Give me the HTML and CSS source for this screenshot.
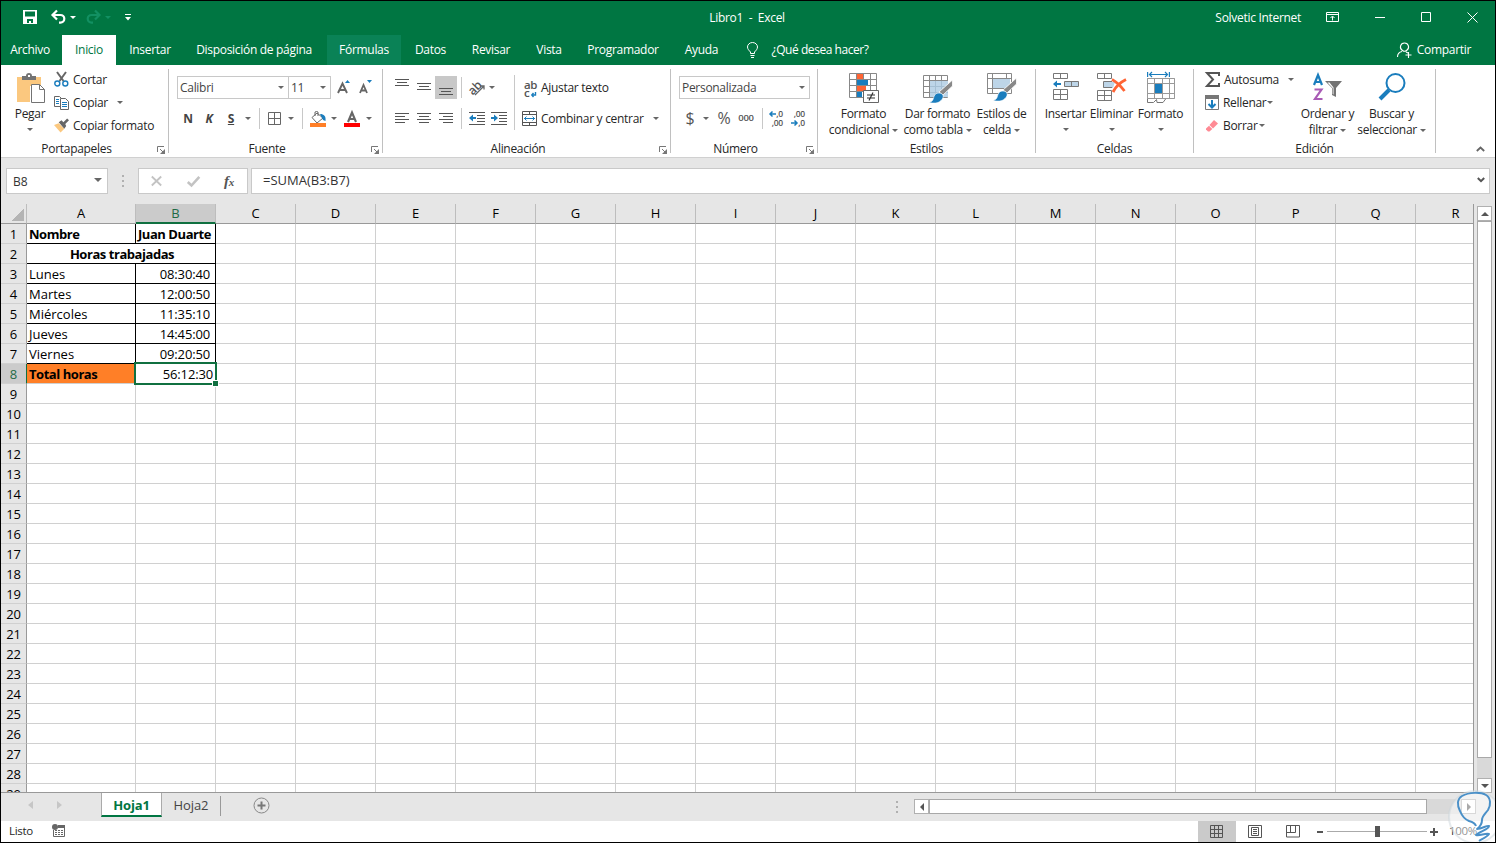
FILE: index.html
```html
<!DOCTYPE html>
<html lang="es">
<head>
    <meta charset="UTF-8">
    <meta name="viewport" content="width=device-width, initial-scale=1.0">
    <title>Libro1 - Excel</title>
    <link rel="stylesheet" href="styles.css">
</head>
<body>
    <div class="window">
        <header>
            <div class="titlebar">
                <div class="quick">
                    <svg width="14" height="14" viewBox="0 0 14 14"><path fill="#fff" fill-rule="evenodd" d="M0 0h14v14H0zM2 1.5v5h10v-5zM4 9v4h2v-2h2v2h2V9z"/></svg>
                    <svg class="undo" width="15" height="14" viewBox="0 0 15 14"><path fill="none" stroke="#fff" stroke-width="2.200" d="M6 .5L1.500 5L6 9.500M2 5h7.500a3.800 3.800 0 0 1 0 7.600H8"/></svg>
                    <i class="caret white"></i>
                    <svg class="redo" width="15" height="14" viewBox="0 0 15 14"><path fill="none" stroke="#129062" stroke-width="2.200" d="M9 .5L13.500 5L9 9.500M13 5H5.500a3.800 3.800 0 0 0 0 7.600H7"/></svg>
                    <i class="caret dim"></i>
                    <svg class="more" width="6" height="7" viewBox="0 0 6 7"><path fill="#fff" d="M0 0h6v1H0zM0 3h6L3 6.500z"/></svg>
                </div>
                <div class="title">Libro1 &nbsp;-&nbsp; Excel</div>
                <div class="user">Solvetic Internet</div>
                <svg class="winbtn" width="13" height="10" viewBox="0 0 13 10"><path fill="none" stroke="#fff" d="M.5.5h12v9H.5zM.5 2.500h12M6.500 8.500v-4M4.500 6l2-2 2 2"/></svg>
                <svg class="winbtn" width="10" height="10" viewBox="0 0 10 10"><path stroke="#fff" d="M0 5.500h10"/></svg>
                <svg class="winbtn" width="10" height="10" viewBox="0 0 10 10"><path fill="none" stroke="#fff" d="M.5.5h9v9h-9z"/></svg>
                <svg class="winbtn" width="11" height="11" viewBox="0 0 11 11"><path stroke="#fff" d="M.5.5l10 10M10.500.5l-10 10"/></svg>
            </div>
            <nav class="tabs">
                <span class="t-archivo">Archivo</span>
                <span class="t-inicio active">Inicio</span>
                <span class="t-insertar">Insertar</span>
                <span class="t-disp">Disposición de página</span>
                <span class="t-formulas hover">Fórmulas</span>
                <span class="t-datos">Datos</span>
                <span class="t-revisar">Revisar</span>
                <span class="t-vista">Vista</span>
                <span class="t-prog">Programador</span>
                <span class="t-ayuda">Ayuda</span>
                <svg class="bulb" width="11" height="16" viewBox="0 0 11 16"><path fill="none" stroke="#fff" d="M3.500 11.500V10C2 8.500.5 7 .5 5a5 4.500 0 0 1 10 0c0 2-1.500 3.500-3 5v1.500zM3.500 13.500h4M4 15.500h3"/></svg>
                <span class="t-que">¿Qué desea hacer?</span>
                <svg class="person" width="15" height="16" viewBox="0 0 15 16"><path fill="none" stroke="#fff" stroke-width="1.100" d="M.5 15c0-3 2-5 4.500-5.500M7.500 1a4 4 0 0 1 2 7.500c-1 .8-3 .8-4 0A4 4 0 0 1 7.500 1zM9 10l2 1M11.500 10v6M8.500 13h6"/></svg>
                <span class="t-share">Compartir</span>
            </nav>
        </header>

        <div class="ribbon">
            <section class="group g-clip">
                <div class="tools">
                    <div class="paste">
                        <svg width="30" height="31" viewBox="0 0 30 31"><path fill="#fbc87f" d="M0 4h24v9H13v16H0z"/><path fill="#737373" d="M5 7V3h4a3 3 0 0 1 6 0h4v4z"/><path fill="#fff" d="M11 2h2v2h-2z"/><path fill="#fff" stroke="#737373" d="M14.500 11.500h8l5 5v13h-13z"/><path fill="none" stroke="#737373" d="M22.500 11.500v5h5"/></svg>
                        <b>Pegar</b>
                        <i class="caret"></i>
                    </div>
                    <div class="list">
                        <div><svg width="15" height="15" viewBox="0 0 15 15"><path stroke="#666" stroke-width="2" d="M3 0l6.500 9M12 0L5.500 9"/><circle cx="3.300" cy="11.500" r="2.500" fill="none" stroke="#1a7dbd" stroke-width="1.400"/><circle cx="11.300" cy="11.500" r="2.500" fill="none" stroke="#1a7dbd" stroke-width="1.400"/></svg>Cortar</div>
                        <div><svg width="15" height="15" viewBox="0 0 15 15"><path fill="#fff" stroke="#666" d="M.5 1.500h5l2 2v8h-7z"/><path stroke="#1a7dbd" d="M2 4.500h3M2 6.500h3M2 8.500h3"/><path fill="#fff" stroke="#666" d="M6.500 3.500h5l3 3v8h-8z"/><path stroke="#1a7dbd" d="M8 7.500h5M8 9.500h5M8 11.500h5"/></svg>Copiar<i class="caret"></i></div>
                        <div><svg width="15" height="15" viewBox="0 0 16 15"><path fill="#fbc87f" d="M0 7l5-2 6 6-4 4z"/><path fill="#666" d="M5 4l3-2 2 2 4-4 2 2-4 4 1 2-2 3z"/></svg>Copiar formato</div>
                    </div>
                </div>
                <div class="label">Portapapeles<svg class="launch" width="8" height="8" viewBox="0 0 8 8"><path fill="none" stroke="#777" d="M.5 6V.5H7M3 3l3 3"/><path fill="#777" d="M8 3v5H3z"/></svg></div>
            </section>

            <section class="group g-font">
                <div class="tools rows">
                    <div class="font-row1">
                        <div class="select">Calibri<i class="caret"></i></div>
                        <div class="select size">11<i class="caret"></i></div>
                        <svg class="grow" width="14" height="15" viewBox="0 0 14 15"><path fill="none" stroke="#666" stroke-width="1.900" d="M1 13L5.500 3.500L10 13M2.500 10h6"/><path fill="#1a7dbd" d="M8 3h5l-2.500-3z"/></svg>
                        <svg class="shrink" width="14" height="15" viewBox="0 0 14 15"><path fill="none" stroke="#666" stroke-width="1.800" d="M1 13l3.500-8L8 13M2.500 10.500h4.500"/><path fill="#1a7dbd" d="M8 0h5l-2.500 3z"/></svg>
                    </div>
                    <div class="font-row2">
                        <b>N</b><b class="it">K</b><b class="un">S</b><i class="caret"></i><i class="sep"></i>
                        <svg width="13" height="13" viewBox="0 0 13 13"><path fill="none" stroke="#666" d="M.5.500h12v12H.5zM6.500 0v13M0 6.500h13"/></svg>
                        <i class="caret"></i><i class="sep"></i>
                        <svg width="16" height="16" viewBox="0 0 16 16"><path fill="#fff" stroke="#666" d="M2 6.500L7 2l6 5-6 5z"/><path fill="none" stroke="#666" d="M5 5V1q1.500-1 3 0v4"/><path fill="#1a7dbd" d="M10 3c4 0 6 2 5.500 7L13 9z"/><path fill="#ff7f27" d="M0 12h16v4H0z"/></svg>
                        <i class="caret"></i>
                        <svg width="16" height="16" viewBox="0 0 16 16"><path fill="none" stroke="#666" stroke-width="2.100" d="M4 11l4-9.500L12 11M5.500 8h5"/><path fill="red" d="M0 12h16v4H0z"/></svg>
                        <i class="caret"></i>
                    </div>
                </div>
                <div class="label">Fuente<svg class="launch" width="8" height="8" viewBox="0 0 8 8"><path fill="none" stroke="#777" d="M.5 6V.5H7M3 3l3 3"/><path fill="#777" d="M8 3v5H3z"/></svg></div>
            </section>

            <section class="group g-align">
                <div class="tools">
                    <div class="rows align-left">
                        <div class="align-row1">
                            <svg width="22" height="23" viewBox="0 0 22 23"><path stroke="#555" d="M4 3.500h14M6 6.500h10M4 9.500h14"/></svg>
                            <svg width="22" height="23" viewBox="0 0 22 23"><path stroke="#555" d="M4 7.500h14M6 10.500h10M4 13.500h14"/></svg>
                            <svg class="pressed" width="22" height="23" viewBox="0 0 22 23"><path stroke="#555" d="M4 12.500h14M6 15.500h10M4 18.500h14"/></svg>
                            <i class="sep"></i>
                            <div class="orient"><span>ab</span><svg width="12" height="12" viewBox="0 0 12 12"><path fill="none" stroke="#666" stroke-width="1.300" d="M1 11L10 2M6.500 2H10v3.500"/></svg></div>
                            <i class="caret"></i>
                        </div>
                        <div class="align-row2">
                            <svg width="14" height="11" viewBox="0 0 14 11"><path stroke="#555" d="M0 .5h14M0 3.500h10M0 6.500h14M0 9.500h10"/></svg>
                            <svg width="14" height="11" viewBox="0 0 14 11"><path stroke="#555" d="M0 .5h14M2 3.500h10M0 6.500h14M2 9.500h10"/></svg>
                            <svg width="14" height="11" viewBox="0 0 14 11"><path stroke="#555" d="M0 .5h14M4 3.500h10M0 6.500h14M4 9.500h10"/></svg>
                            <i class="sep"></i>
                            <svg class="indent" width="16" height="13" viewBox="0 0 16 13"><path stroke="#555" d="M0 .5h16M8 3.500h8M8 6.500h8M8 9.500h8M0 12.500h16"/><path fill="#1a7dbd" d="M0 6l4-3.500V5h3v2H4v2.500z"/></svg>
                            <svg class="indent" width="16" height="13" viewBox="0 0 16 13"><path stroke="#555" d="M0 .5h16M8 3.500h8M8 6.500h8M8 9.500h8M0 12.500h16"/><path fill="#1a7dbd" d="M7 6L3 2.500V5H0v2h3v2.500z"/></svg>
                        </div>
                    </div>
                    <i class="sep tall"></i>
                    <div class="rows wrap">
                        <div class="wrap-row1"><div class="abc"><span>ab</span><span>c<svg width="5" height="5" viewBox="0 0 5 5"><path fill="none" stroke="#1a7dbd" stroke-width="1.400" d="M4.500 0v3H1M2.500 1L.8 3l1.700 2"/></svg></span></div>Ajustar texto</div>
                        <div class="wrap-row2"><svg width="15" height="15" viewBox="0 0 15 15"><path fill="none" stroke="#555" d="M.5.500h14v14H.5zM0 3.500h15M0 11.500h15M7.500 0v3.500M7.500 11.500V15"/><path fill="none" stroke="#1a7dbd" d="M2 7.500h11M4.500 5.500l-2 2 2 2M10.500 5.500l2 2-2 2"/></svg><span>Combinar y centrar</span><i class="caret"></i></div>
                    </div>
                </div>
                <div class="label">Alineación<svg class="launch" width="8" height="8" viewBox="0 0 8 8"><path fill="none" stroke="#777" d="M.5 6V.5H7M3 3l3 3"/><path fill="#777" d="M8 3v5H3z"/></svg></div>
            </section>

            <section class="group g-num">
                <div class="tools rows">
                    <div class="num-row1"><div class="select">Personalizada<i class="caret"></i></div></div>
                    <div class="num-row2">
                        <span class="sym">$</span><i class="caret"></i><span class="sym">%</span><span class="zeros">000</span><i class="sep"></i>
                        <div class="dec"><span><svg width="7" height="6" viewBox="0 0 7 6"><path fill="none" stroke="#1a7dbd" stroke-width="1.500" d="M7 3H1M3.500.5L1 3l2.500 2.500"/></svg>,0</span><span>,00</span></div>
                        <div class="dec"><span>,00</span><span><svg width="7" height="6" viewBox="0 0 7 6"><path fill="none" stroke="#1a7dbd" stroke-width="1.500" d="M0 3h6M3.500.5L6 3 3.500 5.500"/></svg>,0</span></div>
                    </div>
                </div>
                <div class="label">Número<svg class="launch" width="8" height="8" viewBox="0 0 8 8"><path fill="none" stroke="#777" d="M.5 6V.5H7M3 3l3 3"/><path fill="#777" d="M8 3v5H3z"/></svg></div>
            </section>

            <section class="group g-style">
                <div class="tools">
                    <div class="big w74">
                        <svg width="30" height="31" viewBox="0 0 30 31"><path fill="#fff" stroke="#888" d="M.5.500h27v24H.5zM.5 6.500h27M.5 12.500h27M.5 18.500h27M7.500.5v24M14.500.5v24M21.500.5v24"/><path fill="#ff6434" d="M8 1h6v5H8zM8 13h9v5H8z"/><path fill="#1a7dbd" d="M8 7h11v5H8zM8 19h5v5H8z"/><path fill="#fff" stroke="#666" d="M14.500 17.500h15v12h-15z"/><path stroke="#333" stroke-width="1.200" d="M18 22h8M18 25h8M24 19.500l-4 8"/></svg>
                        <b>Formato</b><b>condicional <i class="caret"></i></b>
                    </div>
                    <div class="big w74">
                        <svg width="30" height="31" viewBox="0 0 30 31"><path fill="#fff" stroke="#888" d="M.5 2.500h24v22H.5zM.5 7.500h24M.5 13.500h24M.5 19.500h24M6.500 2.500v22M12.500 2.500v22M18.500 2.500v22"/><path fill="#bdd5e8" d="M7 8h18v16H7z"/><path stroke="#a5bfd3" d="M7 13.500h18M7 19.500h18M12.500 8v16M18.500 8v16"/><path fill="#888" stroke="#fff" stroke-width=".8" d="M29.500 7v6L20 22l-4-3z"/><path fill="#1a7dbd" stroke="#fff" stroke-width=".6" d="M16 20c4 0 6 4 2 7.500-3 3-7 3-12 2 4-1 4-3 5-6s3-3.500 5-3.500z"/></svg>
                        <b>Dar formato</b><b>como tabla <i class="caret"></i></b>
                    </div>
                    <div class="big w54">
                        <svg width="30" height="31" viewBox="0 0 30 31"><path fill="#fff" stroke="#888" d="M.5.500h24v20H.5zM.5 5.500h24M.5 15.500h24M5.500.5v20M19.500.5v20"/><path fill="#bdd5e8" d="M6 6h17v9H6z"/><path fill="#888" stroke="#fff" stroke-width=".8" d="M29.500 5v6L20 20l-4-3z"/><path fill="#1a7dbd" stroke="#fff" stroke-width=".6" d="M16 18c4 0 6 4 2 7.500-3 3-7 3-12 2 4-1 4-3 5-6s3-3.500 5-3.500z"/></svg>
                        <b>Estilos de</b><b>celda <i class="caret"></i></b>
                    </div>
                </div>
                <div class="label">Estilos</div>
            </section>

            <section class="group g-cells">
                <div class="tools">
                    <div class="big w46">
                        <svg width="28" height="31" viewBox="0 0 28 31"><path fill="#fff" stroke="#777" d="M1.500.500h14v5h-14zM8.500.5v5M1.500 16.500h14v10h-14zM8.500 16.500v10M1.500 21.500h14"/><path fill="#bdd5e8" stroke="#777" d="M12.500 8.500h14v5h-14zM19.500 8.500v5"/><path fill="#1a7dbd" d="M1 11l4-3.500V10h4v2H5v2.500z"/></svg>
                        <b>Insertar</b><i class="caret"></i>
                    </div>
                    <div class="big w46">
                        <svg width="30" height="31" viewBox="0 0 30 31"><path fill="#fff" stroke="#777" d="M.5.500h14v5H.5zM7.500.5v5M.5 17.500h14v10H.5zM7.500 17.500v10M.5 22.500h14"/><path fill="#bdd5e8" d="M6 9h12l-2 6H6z"/><path fill="none" stroke="#777" d="M15 8.500H6.500v6H15"/><path fill="none" stroke="#ff6434" stroke-width="2.800" d="M15 6.500c4 2 9 7 12.500 11.500M29 6.500C24 9 19 13 16 19"/></svg>
                        <b>Eliminar</b><i class="caret"></i>
                    </div>
                    <div class="big w52">
                        <svg width="28" height="31" viewBox="0 0 28 31"><path fill="none" stroke="#1a7dbd" stroke-width="1.200" d="M.6-1v5M22.400-1v5M2 1.500h19M5-1L2.500 1.500 5 4M18-1l2.500 2.500L18 4"/><path fill="#fff" stroke="#999" d="M.5 5.500h27v20H.5zM.5 10.500h27M.5 20.500h27M7.500 5.500v20M15.500 5.500v20M22.500 5.500v20"/><path fill="#fff" stroke="#777" d="M.5 5.500v24h6l3-3 .5 3h6l3-4"/><path fill="#fff" stroke="#999" d="M.5 5.500h27v20H.5zM.5 10.500h27M.5 20.500h27M7.500 5.500v20M15.500 5.500v20M22.500 5.500v20"/><path fill="#1a7dbd" d="M8 11h7v9H8z"/></svg>
                        <b>Formato</b><i class="caret"></i>
                    </div>
                </div>
                <div class="label">Celdas</div>
            </section>

            <section class="group g-edit">
                <div class="tools">
                    <div class="list">
                        <div><svg width="15" height="15" viewBox="0 0 15 15"><path fill="none" stroke="#555" stroke-width="2" d="M14 4V1H2l6 6.500L2 14h12v-3"/></svg>Autosuma<i class="caret far"></i></div>
                        <div><svg width="14" height="15" viewBox="0 0 14 15"><path fill="#fff" stroke="#777" d="M.5.500h13v14H.5z"/><path fill="#777" d="M0 0h14v4H0z"/><path fill="none" stroke="#1a7dbd" stroke-width="2" d="M7 5v7M3.500 9L7 12.500 10.500 9"/></svg>Rellenar<i class="caret near"></i></div>
                        <div><svg width="14" height="14" viewBox="0 0 14 14"><path fill="#ff8a94" d="M9 1l4 3.500-5 5L4.500 6z"/><path fill="#ff8a94" d="M4 6.800l3.300 3.300L4.500 12.500H3L1 10.500v-1z"/></svg>Borrar<i class="caret near"></i></div>
                    </div>
                    <div class="big w60">
                        <svg width="29" height="31" viewBox="0 0 29 31"><path fill="none" stroke="#1a7dbd" stroke-width="2.200" d="M1 12L5 2l4 10M2.500 9h5.500"/><path fill="none" stroke="#a95bb5" stroke-width="2.200" d="M1.500 16.500h7L2 26h7.500"/><path fill="#737373" d="M12 8h17l-6 7v9l-4-2v-7z"/><path fill="#fff" d="M14.500 9.500h2l4 5v7l-.8-.5v-6z"/></svg>
                        <b>Ordenar y</b><b>filtrar <i class="caret"></i></b>
                    </div>
                    <div class="big w68">
                        <svg width="28" height="31" viewBox="0 0 28 31"><circle cx="17.500" cy="10" r="9" fill="#fff" stroke="#1a7dbd" stroke-width="2"/><path stroke="#1a7dbd" stroke-width="4" d="M11 17L2 26"/></svg>
                        <b>Buscar y</b><b>seleccionar <i class="caret"></i></b>
                    </div>
                </div>
                <div class="label">Edición</div>
            </section>
            <svg class="collapse" width="9" height="6" viewBox="0 0 9 6"><path fill="none" stroke="#666" stroke-width="1.800" d="M.8 5l3.700-3.500L8.200 5"/></svg>
        </div>

        <div class="formulabar">
            <div class="namebox">B8<i class="caret"></i></div>
            <div class="dots"><i></i><i></i><i></i></div>
            <div class="fxbox">
                <svg width="11" height="10" viewBox="0 0 11 10"><path stroke="#c3c3c3" stroke-width="1.800" d="M.8.500l9.400 9M10.200.500L.8 9.500"/></svg>
                <svg width="13" height="11" viewBox="0 0 13 11"><path fill="none" stroke="#c3c3c3" stroke-width="2.600" d="M.8 6L4.500 9.500 12.300.8"/></svg>
                <span>f<small>x</small></span>
            </div>
            <div class="formula">=SUMA(B3:B7)<svg width="8" height="6" viewBox="0 0 8 6"><path fill="none" stroke="#555" stroke-width="2" d="M.8 1L4 4.200 7.200 1"/></svg></div>
        </div>

        <div class="workarea">
            <div class="sheet">
                <table>
                    <thead><tr id="letras"></tr></thead>
                    <tbody id="filas"></tbody>
                </table>
                <div class="selection"></div>
            </div>
            <div class="vscroll">
                <div class="arrow"><i class="up"></i></div>
                <div class="vthumb"></div>
                <div class="vtrack"></div>
                <div class="arrow"><i class="down"></i></div>
            </div>
        </div>

        <div class="sheettabs">
            <i class="prev"></i><i class="next"></i>
            <span class="current">Hoja1</span>
            <span class="other">Hoja2</span>
            <svg class="add" width="17" height="17" viewBox="0 0 17 17"><circle cx="8.500" cy="8.500" r="7.500" fill="none" stroke="#888"/><path stroke="#777" stroke-width="2" d="M4.500 8.500h8M8.500 4.500v8"/></svg>
            <div class="dots"><i></i><i></i><i></i></div>
            <div class="hscroll"><div class="harrow"><i class="left"></i></div><div class="hthumb"></div><div class="htrack"></div><div class="harrow"><i class="right"></i></div></div>
        </div>

        <footer>
            <span class="ready">Listo</span>
            <svg width="13" height="13" viewBox="0 0 13 13"><path fill="none" stroke="#666" d="M1.500 6v6.500h11V1"/><path fill="#666" d="M6 1h7v3H6z"/><circle cx="3" cy="3" r="3" fill="#666"/><path stroke="#666" stroke-dasharray="2 1" d="M3 6.500h8M3 8.500h8M3 10.500h8"/></svg>
            <div class="views">
                <div class="on"><svg width="13" height="13" viewBox="0 0 13 13"><path fill="none" stroke="#555" d="M.5.500h12v12H.5zM4.500.5v12M8.500.5v12M.5 4.500h12M.5 8.500h12"/></svg></div>
                <div><svg width="14" height="13" viewBox="0 0 14 13"><path fill="none" stroke="#555" d="M.5.500h13v12H.5zM3.500 2.500h7v8h-7zM5 4.500h4M5 6.500h4M5 8.500h4"/></svg></div>
                <div><svg width="14" height="13" viewBox="0 0 14 13"><path fill="none" stroke="#555" d="M.5.500h13v11.500H.5zM4.500.5v7M9.500.5v7M.5 7.500h9"/></svg></div>
            </div>
            <div class="zoom"><i class="minus"></i><div class="line"><i></i></div><svg width="8" height="8" viewBox="0 0 8 8"><path stroke="#555" stroke-width="2" d="M0 4h8M4 0v8"/></svg></div>
            <span class="pct">100%</span>
        </footer>

        <svg class="mark" width="50" height="52" viewBox="0 0 50 52"><circle cx="29" cy="27" r="26" fill="#fff" fill-opacity=".5" stroke="#ccd5dc" stroke-opacity=".5" stroke-width="2"/><path fill="none" stroke="#4a90c8" stroke-width="2" stroke-linejoin="round" d="M30 36c-1-3-3-4-7-5-5-2-7-5-9-10C11 15 11 9 16 6c7-4 19-4 24-1 5 3 5 10 2 15-3 4-6 6-6 10 0 4-1 6-5 9 5 0 10-4 12-3 1 3-11 6-13 9 4 1 9-2 13-1-2 3-7 5-10 7"/></svg>
    </div>
    <script>
        let datos = [
            ["Nombre", "Juan Duarte"],
            ["Horas trabajadas"],
            ["Lunes", "08:30:40"],
            ["Martes", "12:00:50"],
            ["Miércoles", "11:35:10"],
            ["Jueves", "14:45:00"],
            ["Viernes", "09:20:50"],
            ["Total horas", "56:12:30"]
        ];
        let letras = document.getElementById("letras");
        let filas = document.getElementById("filas");

        function celda(fila, tipo, texto, clase) {
            let c = document.createElement(tipo);
            c.innerText = texto;
            if (clase) {
                c.className = clase;
            }
            fila.appendChild(c);
            return c;
        }

        celda(letras, "th", "", "corner");
        for (let i = 0; i < 18; i++) {
            celda(letras, "th", String.fromCharCode(65 + i), i == 0 ? "first" : i == 1 ? "sel" : "");
        }
        for (let n = 1; n <= 29; n++) {
            let fila = document.createElement("tr");
            let d = datos[n - 1];
            celda(fila, "th", n, n == 8 ? "sel" : "");
            let resto = 18;
            if (n == 2) {
                celda(fila, "td", d[0], "dato titulo").colSpan = 2;
                resto = 16;
            } else if (d) {
                let negrita = n == 1 ? " negrita" : "";
                celda(fila, "td", d[0], n == 8 ? "total" : "dato" + negrita);
                celda(fila, "td", d[1], n == 8 ? "activa" : n == 1 ? "dato negrita" : "dato hora");
                resto = 16;
            }
            for (let i = 0; i < resto; i++) {
                celda(fila, "td", "");
            }
            filas.appendChild(fila);
        }
    </script>
</body>
</html>
```

FILE: styles.css
```css
* {
    box-sizing: border-box;
}
html, body {
    margin: 0;
    padding: 0;
}
body {
    font-family: "Open Sans", "Noto Sans", sans-serif;
    font-size: 12px;
    letter-spacing: -0.3px;
    color: #262626;
    overflow: hidden;
}
svg {
    display: block;
    flex: none;
    overflow: visible;
}
b {
    font-weight: normal;
}
.window {
    position: relative;
    display: flex;
    flex-direction: column;
    width: 1496px;
    height: 843px;
    border: 1px solid #000;
    background-color: #e6e6e6;
    overflow: hidden;
}
.caret {
    flex: none;
    display: inline-block;
    width: 0;
    height: 0;
    border: 3px solid transparent;
    border-top-color: #666;
    border-bottom: 0;
}
.caret.white {
    border-top-color: #fff;
}
.caret.dim {
    border-top-color: #129062;
}
.sep {
    width: 1px;
    height: 21px;
    background-color: #c8c8c8;
}

/* title bar and tabs */
header {
    height: 64px;
    background-color: #007642;
    color: #fff;
}
.titlebar {
    display: flex;
    align-items: center;
    height: 34px;
    padding-bottom: 2px;
}
.quick {
    display: flex;
    align-items: center;
    width: 680px;
    padding-left: 22px;
}
.quick .undo {
    margin-left: 14px;
}
.quick .caret {
    margin-left: 4px;
}
.quick .redo {
    margin-left: 10px;
}
.quick .more {
    margin-left: 14px;
}
.title {
    width: 132px;
    text-align: center;
}
.user {
    flex: 1;
    text-align: right;
    margin-right: 25px;
}
.winbtn {
    margin-right: 36px;
}
.winbtn:last-child {
    margin-right: 17px;
}
.tabs {
    display: flex;
    align-items: center;
    height: 30px;
    gap: 3px;
}
.tabs span {
    flex: none;
    height: 30px;
    line-height: 30px;
    text-align: center;
    white-space: nowrap;
}
.tabs .active {
    background-color: #fff;
    color: #007642;
}
.tabs .hover {
    background-color: #0a8256;
}
.tabs .t-archivo { width: 58px; }
.tabs .t-inicio { width: 54px; }
.tabs .t-insertar { width: 62px; }
.tabs .t-disp { width: 140px; }
.tabs .t-formulas { width: 74px; }
.tabs .t-datos { width: 53px; }
.tabs .t-revisar { width: 62px; }
.tabs .t-vista { width: 48px; }
.tabs .t-prog { width: 94px; }
.tabs .t-ayuda { width: 57px; }
.tabs .t-que {
    width: 104px;
    letter-spacing: -0.45px;
}
.bulb {
    margin: 0 7px 0 14px;
}
.person {
    margin-left: auto;
}
.t-share {
    width: 58px;
    margin-right: 22px;
}

/* ribbon */
.ribbon {
    display: flex;
    height: 93px;
    padding-top: 4px;
    background-color: #fff;
    border-bottom: 1px solid #d0d0d0;
}
.group {
    display: flex;
    flex-direction: column;
    flex: none;
    height: 84px;
    border-right: 1px solid #c0c0c0;
}
.g-clip { width: 168px; }
.g-font { width: 214px; }
.g-align { width: 288px; }
.g-num { width: 147px; }
.g-style { width: 218px; }
.g-cells { width: 158px; }
.g-edit { width: 242px; }
.tools {
    display: flex;
    flex: none;
    height: 72px;
}
.label {
    position: relative;
    flex: none;
    height: 16px;
    line-height: 16px;
    text-align: center;
}
.g-clip .label {
    padding-right: 16px;
}
.g-font .label {
    padding-right: 17px;
}
.g-align .label, .g-num .label {
    padding-right: 17px;
}
.launch {
    position: absolute;
    right: 3px;
    top: 5px;
}
.paste {
    display: flex;
    flex-direction: column;
    align-items: center;
    width: 46px;
    padding: 4px 0 0 12px;
}
.paste svg {
    margin-left: 4px;
}
.paste b {
    line-height: 20px;
}
.paste .caret {
    margin-top: 4px;
}
.list {
    margin-top: -1px;
}
.list div {
    display: flex;
    align-items: center;
    height: 23px;
    white-space: nowrap;
}
.g-clip .list {
    padding-left: 7px;
}
.list svg {
    margin-right: 4px;
}
.g-clip .list .caret {
    margin-left: 9px;
}
.rows, .tools.rows {
    display: flex;
    flex-direction: column;
    padding-top: 7px;
}
.select {
    display: flex;
    align-items: center;
    justify-content: space-between;
    height: 23px;
    padding: 0 4px 0 2px;
    border: 1px solid #c8c8c8;
    color: #444;
}
.font-row1 {
    display: flex;
    align-items: center;
    margin-left: 8px;
}
.font-row1 .select {
    width: 112px;
}
.font-row1 .size {
    width: 43px;
    margin-left: -1px;
}
.grow {
    margin-left: 6px;
}
.shrink {
    margin-left: 8px;
}
.font-row2, .align-row1, .align-row2, .num-row2 {
    display: grid;
    align-items: center;
    justify-items: center;
}
.font-row2 {
    grid-template-columns: 22px 20px 24px 10px 12px 18px 16px 6px 25px 8px 27px 7px;
    margin: 8px 0 0 8px;
    height: 23px;
}
.font-row2 b {
    font-weight: 700;
    color: #444;
}
.font-row2 .it {
    font-style: italic;
}
.font-row2 .un {
    text-decoration: underline;
}
.align-left {
    width: 131px;
}
.align-row1 {
    grid-template-columns: 22px 22px 22px 8px 24px 6px;
    margin-left: 8px;
    height: 23px;
}
.align-row2 {
    grid-template-columns: 22px 22px 22px 8px 22px 22px;
    margin: 8px 0 0 8px;
    height: 22px;
}
.indent {
    margin-left: 2px;
}
.pressed {
    background-color: #c8c8c8;
}
.orient {
    display: flex;
    align-items: center;
    color: #555;
}
.orient span {
    font-size: 12px;
    line-height: 12px;
    font-weight: 600;
    transform: rotate(-45deg);
}
.orient svg {
    margin: 4px 0 0 -7px;
}
.sep.tall {
    height: 55px;
    margin-top: 6px;
}
.wrap {
    padding-left: 7px;
}
.wrap-row1, .wrap-row2 {
    display: flex;
    align-items: center;
    height: 23px;
    white-space: nowrap;
}
.wrap-row2 {
    margin-top: 8px;
}
.wrap-row2 span {
    width: 104px;
    margin-left: 4px;
}
.wrap-row2 .caret {
    margin-left: 8px;
}
.abc {
    display: flex;
    flex-direction: column;
    width: 19px;
    padding-left: 2px;
    font-size: 11.5px;
    line-height: 9px;
    font-weight: 600;
    color: #555;
}
.abc span {
    height: 8px;
}
.abc svg, .dec svg {
    display: inline-block;
}
.abc svg {
    margin-left: 2px;
}
.num-row1 {
    width: 131px;
    margin-left: 8px;
}
.num-row2 {
    grid-template-columns: 22px 10px 26px 18px 14px 14px 30px;
    margin: 8px 0 0 8px;
    height: 23px;
    color: #555;
}
.sym {
    font-size: 16px;
    line-height: 20px;
    margin-top: -2px;
}
.zeros {
    font-size: 9.5px;
    line-height: 12px;
    font-weight: 600;
    margin-top: -2px;
}
.dec {
    display: flex;
    flex-direction: column;
    font-size: 8.5px;
    line-height: 9px;
    white-space: nowrap;
    text-align: right;
    font-weight: 600;
    margin-top: -2px;
}
.big {
    display: flex;
    flex-direction: column;
    align-items: center;
    padding: 4px 0 0 1px;
    white-space: nowrap;
}
.big svg {
    margin-bottom: 2px;
}
.big b {
    line-height: 16px;
}
.big b .caret {
    margin-bottom: 2px;
}
.big > .caret {
    margin-top: 6px;
}
.w46 { width: 46px; }
.w52 { width: 52px; }
.w54 { width: 54px; }
.w60 { width: 60px; }
.w68 { width: 68px; }
.w74 { width: 74px; }
.g-style .tools {
    padding-left: 8px;
}
.g-cells .tools {
    padding-left: 6px;
}
.g-edit .list {
    width: 103px;
    padding-left: 11px;
}
.list .far {
    margin-left: 9px;
}
.list .near {
    margin-left: 1px;
}
.collapse {
    margin: 77px 0 0 40px;
}

/* formula bar */
.formulabar {
    display: flex;
    padding: 10px 5px 0 5px;
    height: 46px;
}
.namebox, .fxbox, .formula {
    display: flex;
    align-items: center;
    height: 26px;
    background-color: #fff;
    border: 1px solid #c9c9c9;
    color: #333;
}
.namebox {
    width: 102px;
    justify-content: space-between;
    padding: 0 5px 0 6px;
    letter-spacing: 0;
}
.namebox .caret {
    border-width: 4px 4px 0;
    margin-bottom: 2px;
}
.dots {
    display: flex;
    flex-direction: column;
    gap: 3px;
}
.dots i {
    width: 2px;
    height: 2px;
    background-color: #b0b0b0;
}
.formulabar .dots {
    width: 30px;
    align-items: center;
    padding-top: 7px;
}
.fxbox {
    width: 110px;
    padding-left: 12px;
}
.fxbox svg + svg {
    margin-left: 25px;
}
.fxbox span {
    margin-left: 24px;
    font: italic bold 15px/20px "Liberation Serif", serif;
    color: #555;
}
.fxbox small {
    font-size: 11px;
}
.formula {
    flex: 1;
    justify-content: space-between;
    margin-left: 3px;
    padding: 0 4px 2px 11px;
    font-size: 13px;
    letter-spacing: 0;
}

/* cells */
.workarea {
    display: flex;
    height: 589px;
}
.sheet {
    position: relative;
    flex: none;
    width: 1473px;
    height: 589px;
    overflow: hidden;
    border-right: 1px solid #999;
    border-bottom: 1px solid #999;
}
table {
    table-layout: fixed;
    width: 1495px;
    border-spacing: 0;
    font-size: 13px;
    letter-spacing: -0.1px;
    color: #000;
}
th, td {
    height: 20px;
    padding: 0;
    line-height: 18px;
    white-space: nowrap;
    border-right: 1px solid #d0d0d0;
    border-bottom: 1px solid #d0d0d0;
}
td {
    background-color: #fff;
}
th {
    font-weight: normal;
    background-color: #e6e6e6;
}
thead th {
    width: 80px;
    padding-bottom: 1px;
    border-right-color: #bdbdbd;
    border-bottom-color: #999;
}
thead .corner {
    width: 26px;
    background: linear-gradient(135deg, transparent 50%, #b4b4b4 50%) 10px 5px / 13px 12px no-repeat #e6e6e6;
}
thead .first {
    width: 109px;
}
tbody th {
    border-right-color: #999;
}
th.sel {
    background-color: #cbcbcb;
    color: #1f6b46;
}
thead .sel {
    padding-bottom: 0;
    border-bottom: 2px solid #107040;
}
tbody .sel {
    border-right: 1px solid #107040;
}
td.dato {
    padding-left: 2px;
    border-color: #000;
}
td.dato, td.total {
    letter-spacing: 0;
}
td.negrita, td.titulo, td.total {
    font-weight: 700;
    letter-spacing: -0.45px;
}
td.titulo {
    text-align: center;
}
td.hora {
    text-align: right;
    padding-right: 5px;
    letter-spacing: -0.15px;
}
td.total {
    padding-left: 2px;
    background-color: #ff7f27;
}
td.activa {
    text-align: right;
    padding-right: 2px;
    letter-spacing: -0.15px;
}
.selection {
    position: absolute;
    left: 133px;
    top: 158px;
    width: 83px;
    height: 23px;
    border: 2px solid #107040;
}
.selection::after {
    content: "";
    position: absolute;
    right: -3px;
    bottom: -3px;
    width: 5px;
    height: 5px;
    background-color: #107040;
    outline: 1px solid #fff;
}
.vscroll {
    display: flex;
    flex-direction: column;
    width: 15px;
    margin-left: 3px;
    padding-top: 2px;
}
.arrow, .harrow {
    display: flex;
    align-items: center;
    justify-content: center;
    width: 15px;
    height: 15px;
    background-color: #fff;
    border: 1px solid #b0b0b0;
}
.vthumb {
    height: 537px;
    background-color: #fff;
    border: 1px solid #a8a8a8;
}
.vtrack {
    height: 20px;
    background-color: #d9d9d9;
}
.arrow i, .harrow i {
    border: 4px solid transparent;
}
.arrow .up {
    border-top: 0;
    border-bottom-color: #555;
}
.arrow .down {
    border-bottom: 0;
    border-top-color: #555;
}
.harrow .left {
    border-left: 0;
    border-right-color: #555;
}
.harrow .right {
    border-right: 0;
    border-left-color: #555;
}

/* sheet tabs */
.sheettabs {
    display: flex;
    height: 28px;
    font-size: 13px;
    letter-spacing: -0.1px;
}
.prev, .next {
    height: 0;
    margin-top: 8px;
    border: 4px solid transparent;
}
.prev {
    margin-left: 27px;
    border-left: 0;
    border-right: 5px solid #c6c6c6;
}
.next {
    margin-left: 24px;
    border-right: 0;
    border-left: 5px solid #c6c6c6;
}
.current {
    width: 61px;
    height: 24px;
    margin-left: 39px;
    line-height: 25px;
    text-align: center;
    font-weight: 700;
    color: #007642;
    background-color: #fff;
    border: 1px solid #aaa;
    border-top: 0;
    border-bottom: 2px solid #007642;
}
.other {
    width: 59px;
    height: 20px;
    margin-top: 3px;
    line-height: 19px;
    text-align: center;
    color: #444;
    border-right: 1px solid #999;
}
.add {
    margin: 4px 0 0 32px;
}
.sheettabs .dots {
    margin: 8px 0 0 626px;
}
.hscroll {
    display: flex;
    margin: 6px 0 0 16px;
}
.hthumb {
    width: 498px;
    height: 15px;
    background-color: #fff;
    border: 1px solid #a8a8a8;
}
.htrack {
    width: 34px;
    height: 15px;
    background-color: #d9d9d9;
}

/* status bar */
footer {
    display: flex;
    align-items: center;
    height: 21px;
    background-color: #fff;
    font-size: 11.5px;
}
.ready {
    width: 43px;
    padding: 0 0 3px 8px;
}
footer > svg {
    margin: -2px 0 0 8px;
}
.views {
    display: flex;
    margin-left: 1133px;
}
.views div {
    display: flex;
    align-items: center;
    justify-content: center;
    width: 38px;
    height: 21px;
    padding-bottom: 1px;
}
.zoom {
    display: flex;
    align-items: center;
    margin-left: 5px;
}
.views .on {
    padding-right: 1px;
    background-color: #cacaca;
}
.minus {
    width: 6px;
    height: 2px;
    background-color: #555;
}
.line {
    display: flex;
    align-items: center;
    justify-content: center;
    width: 100px;
    height: 1px;
    margin: 0 3px 0 4px;
    background-color: #aaa;
}
.line i {
    width: 5px;
    height: 11px;
    background-color: #555;
}
.pct {
    margin-left: 11px;
    padding-bottom: 3px;
}
.mark {
    position: absolute;
    right: -1px;
    top: 789px;
}
```
